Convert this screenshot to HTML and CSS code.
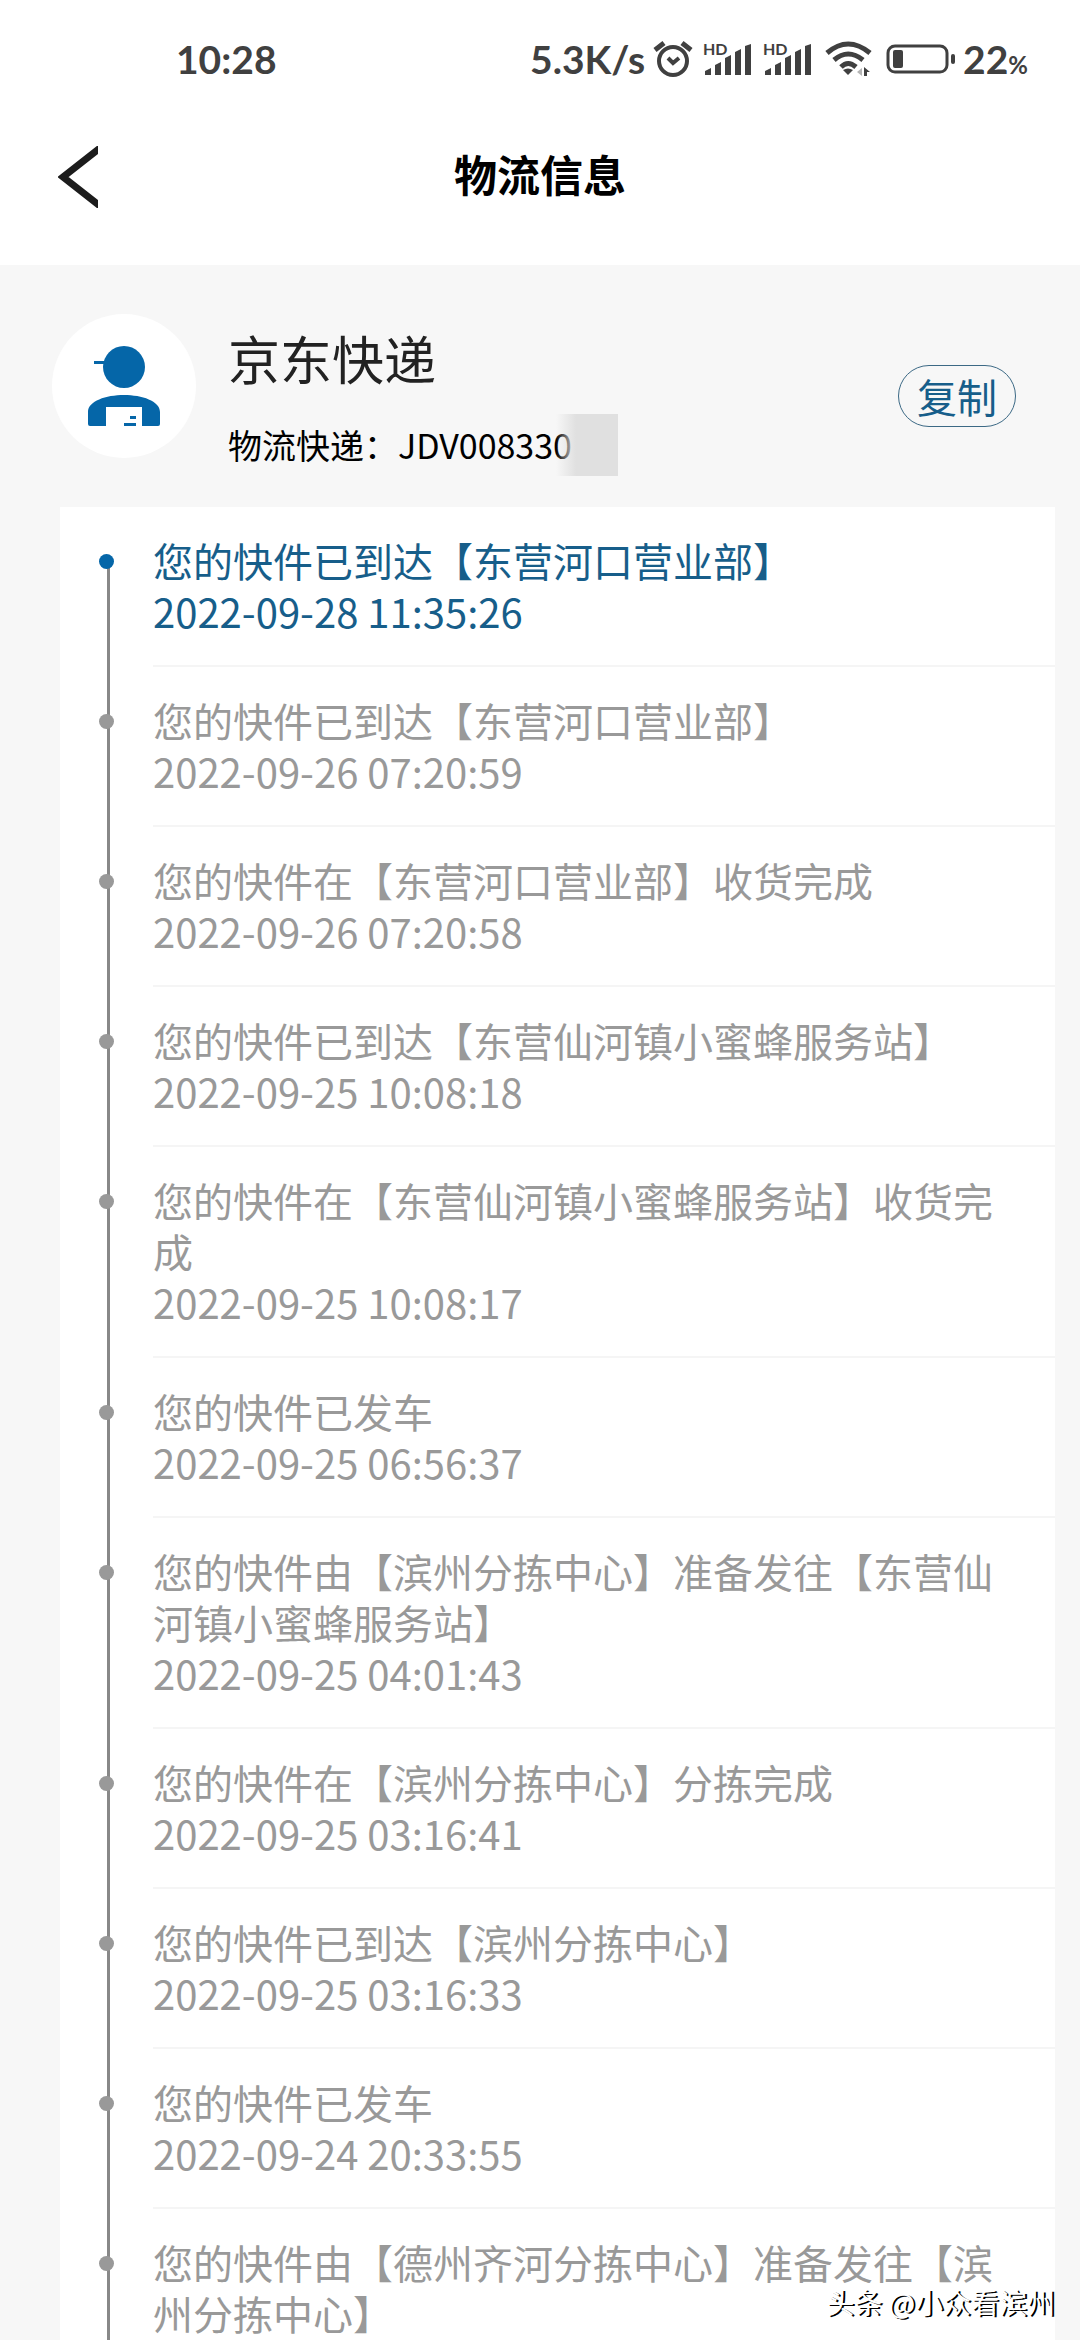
FILE: index.html
```html
<!DOCTYPE html>
<html lang="zh-CN">

<head>
    <meta charset="UTF-8">
    <meta name="viewport" content="width=device-width, initial-scale=1.0">
    <title>物流信息</title>
    <link rel="stylesheet" href="styles.css">
</head>

<body>
    <div class="page">
        <!-- 状态栏 -->
        <div class="status">
            <span>10:28</span>
            <div class="statusRight">
                <span>5.3K/s</span>
                <svg class="alarm" width="40" height="38" viewBox="0 0 40 38" fill="none" stroke="#404040" stroke-width="4">
                    <circle cx="20" cy="21" r="14" />
                    <path d="M2 10L11 3M38 10L29 3" stroke-width="5" />
                    <path d="M15 18L20 23L26 18" />
                </svg>
                <svg class="signal" width="50" height="32" viewBox="0 0 50 32" fill="#404040">
                    <path d="M2 32V28L8 25V32ZM12 32V22L18 19V32ZM22 32V15L28 12V32ZM32 32V9L38 6V32ZM42 32V3L48 1V32Z" />
                    <text class="hd" x="0" y="12">HD</text>
                </svg>
                <svg class="signal" width="50" height="32" viewBox="0 0 50 32" fill="#404040">
                    <path d="M2 32V28L8 25V32ZM12 32V22L18 19V32ZM22 32V15L28 12V32ZM32 32V9L38 6V32ZM42 32V3L48 1V32Z" />
                    <text class="hd" x="0" y="12">HD</text>
                </svg>
                <svg class="wifi" width="48" height="36" viewBox="0 0 48 36" fill="none" stroke="#404040" stroke-width="5">
                    <path d="M2 12Q23 -6 45 12M9 19Q23 7 38 19M16 26Q23 19 31 26" />
                    <path d="M18 29Q23 26 28 29L23 34Z" fill="#404040" stroke="none" />
                    <path d="M37 27V35L32 31Z" fill="#b5b5b5" stroke="none" />
                    <path d="M39 26L45 31H42V35H39Z" fill="#404040" stroke="none" />
                </svg>
                <svg class="battery" width="70" height="30" viewBox="0 0 70 30">
                    <rect x="2" y="2" width="59" height="26" rx="7" fill="none" stroke="#404040" stroke-width="3" />
                    <rect x="7" y="6" width="10" height="18" rx="2" fill="#404040" />
                    <rect x="65" y="10" width="4" height="10" rx="2" fill="#404040" />
                </svg>
                <span>22<small class="percent">%</small></span>
            </div>
        </div>

        <!-- 标题栏 -->
        <header class="header">
            <button class="back" type="button" aria-label="返回">
                <svg width="40" height="62" viewBox="0 0 40 62" fill="none" stroke="#1c1c1c" stroke-width="7">
                    <path d="M42 2L5 31L42 60" />
                </svg>
            </button>
            <h1 class="title">物流信息</h1>
        </header>

        <!-- 快递公司 -->
        <section class="company">
            <div class="avatar">
                <svg width="72" height="80" viewBox="0 0 72 80" fill="#0566a8">
                    <circle cx="36" cy="21" r="21" />
                    <path d="M6 15H20V18H6Z" />
                    <path d="M0 78V66C0 55 18 49 36 49S72 55 72 66V78Q72 80 70 80H54V61H18V80H2Q0 80 0 78Z" />
                    <path d="M42 70H48V73H42ZM36 77H48V80H36Z" />
                </svg>
            </div>
            <div class="info">
                <h2 class="name">京东快递</h2>
                <p class="number">物流快递：JDV008330<span class="mask"></span></p>
            </div>
            <button class="copy" type="button">复制</button>
        </section>

        <!-- 物流轨迹 -->
        <ol class="track">
            <li class="step now">
                <div class="marker"><i class="dot"></i></div>
                <div class="text">您的快件已到达【东营河口营业部】<time>2022-09-28 11:35:26</time></div>
            </li>
            <li class="step">
                <div class="marker"><i class="dot"></i></div>
                <div class="text">您的快件已到达【东营河口营业部】<time>2022-09-26 07:20:59</time></div>
            </li>
            <li class="step">
                <div class="marker"><i class="dot"></i></div>
                <div class="text">您的快件在【东营河口营业部】收货完成<time>2022-09-26 07:20:58</time></div>
            </li>
            <li class="step">
                <div class="marker"><i class="dot"></i></div>
                <div class="text">您的快件已到达【东营仙河镇小蜜蜂服务站】<time>2022-09-25 10:08:18</time></div>
            </li>
            <li class="step">
                <div class="marker"><i class="dot"></i></div>
                <div class="text">您的快件在【东营仙河镇小蜜蜂服务站】收货完成<time>2022-09-25 10:08:17</time></div>
            </li>
            <li class="step">
                <div class="marker"><i class="dot"></i></div>
                <div class="text">您的快件已发车<time>2022-09-25 06:56:37</time></div>
            </li>
            <li class="step">
                <div class="marker"><i class="dot"></i></div>
                <div class="text">您的快件由【滨州分拣中心】准备发往【东营仙河镇小蜜蜂服务站】<time>2022-09-25 04:01:43</time></div>
            </li>
            <li class="step">
                <div class="marker"><i class="dot"></i></div>
                <div class="text">您的快件在【滨州分拣中心】分拣完成<time>2022-09-25 03:16:41</time></div>
            </li>
            <li class="step">
                <div class="marker"><i class="dot"></i></div>
                <div class="text">您的快件已到达【滨州分拣中心】<time>2022-09-25 03:16:33</time></div>
            </li>
            <li class="step">
                <div class="marker"><i class="dot"></i></div>
                <div class="text">您的快件已发车<time>2022-09-24 20:33:55</time></div>
            </li>
            <li class="step">
                <div class="marker"><i class="dot"></i></div>
                <div class="text">您的快件由【德州齐河分拣中心】准备发往【滨州分拣中心】</div>
            </li>
        </ol>

        <div class="watermark">头条 @小众看滨州</div>
    </div>
</body>

</html>
```
FILE: styles.css
```css
* {
    box-sizing: border-box;
}

body {
    margin: 0;
    background-color: #f7f7f7;
    font-family: "Noto Sans CJK SC", sans-serif;
}

h1,
h2,
p,
ol {
    margin: 0;
    padding: 0;
    font-weight: normal;
}

button {
    padding: 0;
    border: 0;
    background: none;
    font-family: inherit;
}

svg {
    display: block;
    overflow: visible;
}

.page {
    position: relative;
    display: flex;
    flex-direction: column;
    height: 100vh;
    overflow: hidden;
}

/* 状态栏 */
.status {
    display: flex;
    flex-shrink: 0;
    justify-content: space-between;
    align-items: center;
    height: 118px;
    padding: 0 52px 0 176px;
    background-color: #fff;
    color: #404040;
    font: bold 39px/40px Lato, sans-serif;
}

.statusRight {
    display: flex;
    align-items: center;
}

.alarm {
    margin-left: 8px;
}

.signal {
    margin-left: 10px;
}

.hd {
    font: bold 16px Lato, sans-serif;
}

.wifi {
    margin-left: 12px;
}

.battery {
    margin: 0 7px 0 13px;
}

.percent {
    font-size: 24px;
    line-height: 24px;
}

/* 标题栏 */
.header {
    display: grid;
    grid-template-columns: 1fr auto 1fr;
    flex-shrink: 0;
    align-items: center;
    height: 147px;
    padding: 0 58px 30px;
    background-color: #fff;
}

.title {
    padding-bottom: 8px;
    color: #000;
    font-size: 43px;
    font-weight: bold;
    line-height: 60px;
}

.back {
    justify-self: start;
}

.back svg {
    overflow: hidden;
}

/* 快递公司 */
.company {
    display: flex;
    flex-shrink: 0;
    align-items: center;
    height: 242px;
    padding: 0 64px 0 52px;
}

.avatar {
    display: flex;
    justify-content: center;
    align-items: center;
    width: 144px;
    height: 144px;
    border-radius: 50%;
    background-color: #fff;
}

.info {
    flex: 1;
    margin-left: 32px;
    padding-top: 22px;
}

.name {
    color: #222;
    font-size: 52px;
    line-height: 80px;
}

.number {
    position: relative;
    width: fit-content;
    margin-top: 16px;
    padding-right: 46px;
    color: #000;
    font-size: 34px;
    line-height: 62px;
}

/* 单号遮挡 */
.mask {
    position: absolute;
    top: 0;
    right: 0;
    width: 62px;
    height: 62px;
    background: linear-gradient(to right, rgba(224, 224, 224, 0), #e0e0e0 20px);
}

.copy {
    width: 118px;
    height: 62px;
    margin-top: 20px;
    border: 1px solid #3c6985;
    border-radius: 31px;
    color: #175e8a;
    font-size: 40px;
    line-height: 58px;
}

/* 物流轨迹 */
.track {
    flex: 1;
    margin: 0 25px 0 60px;
    background-color: #fff;
    list-style: none;
}

.step {
    display: flex;
    color: #999;
}

.marker {
    width: 15px;
    margin: 0 39px;
    padding-top: 47px;
    background: linear-gradient(#888, #888) 8px 0 / 3px 100% no-repeat;
}

.dot {
    display: block;
    width: 15px;
    height: 15px;
    border-radius: 50%;
    background-color: #999;
}

.text {
    flex: 1;
    padding: 28px 40px 28px 0;
    border-bottom: 2px solid #f5f5f5;
    font-size: 40px;
    line-height: 51px;
}

.text time {
    display: block;
}

.now {
    color: #175e8a;
}

.now .marker {
    background-position: 8px 56px;
}

.now .dot {
    background-color: #0566a8;
}

.step:last-child .text {
    border-bottom: 0;
}

.watermark {
    position: absolute;
    right: 25px;
    bottom: 18px;
    color: #fff;
    font-size: 28px;
    line-height: 40px;
    text-shadow: 2px 1px 0 #000;
}
```
